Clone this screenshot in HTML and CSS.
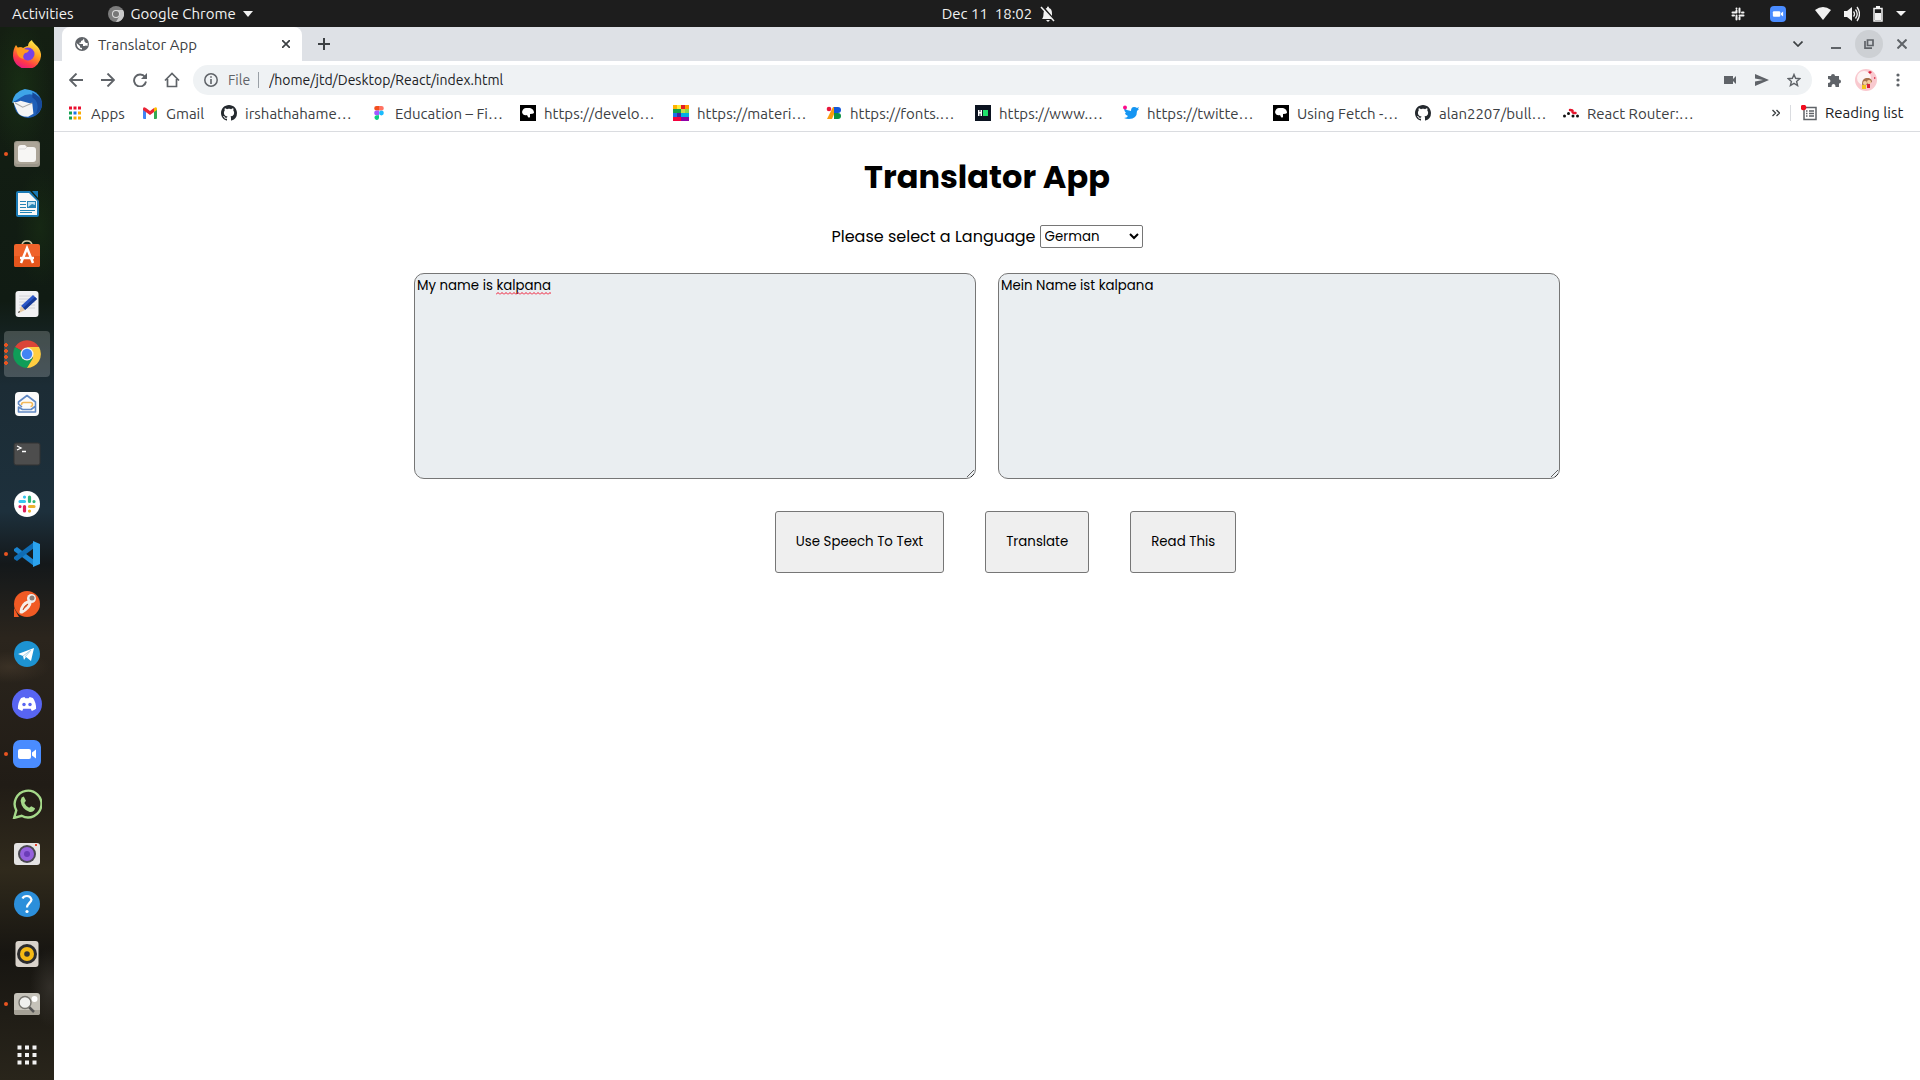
FILE: index.html
```html
<!DOCTYPE html>
<html lang="en">
<head>
<meta charset="utf-8">
<title>Translator App</title>
<link rel="stylesheet" href="styles.css">
</head>
<body>
<svg class="defs" aria-hidden="true">
  <symbol id="github" viewBox="0 0 16 16"><path fill="#24292e" d="M8 0C3.58 0 0 3.58 0 8c0 3.54 2.29 6.53 5.47 7.59.4.07.55-.17.55-.38 0-.19-.01-.82-.01-1.49-2.01.37-2.53-.49-2.69-.94-.09-.23-.48-.94-.82-1.13-.28-.15-.68-.52-.01-.53.63-.01 1.08.58 1.23.82.72 1.21 1.87.87 2.33.66.07-.52.28-.87.51-1.07-1.78-.2-3.64-.89-3.64-3.95 0-.87.31-1.59.82-2.15-.08-.2-.36-1.02.08-2.12 0 0 .67-.21 2.2.82.64-.18 1.32-.27 2-.27s1.36.09 2 .27c1.53-1.04 2.2-.82 2.2-.82.44 1.1.16 1.92.08 2.12.51.56.82 1.27.82 2.15 0 3.07-1.87 3.75-3.65 3.95.29.25.54.73.54 1.48 0 1.07-.01 1.93-.01 2.2 0 .21.15.46.55.38A8.01 8.01 0 0 0 16 8c0-4.42-3.58-8-8-8z"/></symbol>
  <symbol id="mdn" viewBox="0 0 16 16"><path d="M0 0h16v16H0z"/><path fill="#fff" d="M2 7q1-4 4-4h4q4 1 4 5-1 1-4 1v3q-1 1-2 0l-1-2q-4 1-5-3z"/></symbol>
  <symbol id="camera" viewBox="0 0 28 28"><rect width="28" height="28" rx="7" fill="#4a8cff"/><rect x="5" y="9" width="13" height="10" rx="2" fill="#fff"/><path fill="#fff" d="M19 12.500l4-3v9l-4-3z"/></symbol>
</svg>

<header class="topbar">
  <div class="top-left">
    <span>Activities</span>
    <span class="app-menu">
      <svg width="16" height="16" viewBox="0 0 16 16"><circle cx="8" cy="8" r="8" fill="#7c7c7c"/><path fill="#c8c8c8" d="M8 4h7a8 8 0 0 1-7 12l4-7z"/><circle cx="8" cy="8" r="4" fill="#ddd"/><circle cx="8" cy="8" r="3" fill="#777"/></svg>
      Google Chrome
      <svg width="10" height="6" viewBox="0 0 10 6"><path fill="#f2f2f2" d="M0 0h10L5 6z"/></svg>
    </span>
  </div>
  <div class="clock">
    <span>Dec 11&nbsp; 18:02</span>
    <svg width="16" height="16" viewBox="0 0 16 16"><path fill="#f2f2f2" d="M2 13c2-2 1-5 2-8 1-2 2-3 3-3 0-2 2-2 2 0 3 1 3 4 3 6 0 3 0 3 2 5zM6 14h4l-2 2z"/><path stroke="#1d1d1d" stroke-width="2" d="M2 0l13 15"/><path stroke="#f2f2f2" stroke-width="1.500" d="M1 1l13 14"/></svg>
  </div>
  <div class="tray">
    <svg width="14" height="14" viewBox="0 0 14 14" fill="none" stroke="#f2f2f2" stroke-width="2" stroke-linecap="round"><path d="M5.500 3.500v2M1.500 5.500h2.800M8.500 1.500v4M8.500 5.500h0M11 5.500h1.500M8.500 10.500v0M9.700 8.500h2.800M8.500 8.500v0M5.500 8.500v4M1.500 8.500h1.500M8.500 10.800v1.500M5.500 1.500v0"/></svg>
    <svg class="tray-zoom" width="16" height="16"><use href="#camera"/></svg>
    <svg width="16" height="13" viewBox="0 0 16 13"><path fill="#f2f2f2" d="M0 3q8-6 16 0L8 13z"/></svg>
    <svg width="16" height="16" viewBox="0 0 16 16"><path fill="#f2f2f2" d="M0 5h3l5-4v14l-5-4H0z"/><path fill="none" stroke="#f2f2f2" stroke-width="1.300" d="M9.500 5.500q2 2.500 0 5M11.500 3.500q3.500 4.500 0 9M13 1q5 7 0 14" /></svg>
    <svg width="10" height="16" viewBox="0 0 10 16"><path fill="none" stroke="#f2f2f2" stroke-width="1.500" d="M1 2.500h8v12.500H1z"/><path fill="#f2f2f2" d="M3 0h4v2H3zM2 7h6v7H2z"/></svg>
    <svg width="10" height="5" viewBox="0 0 10 5"><path fill="#f2f2f2" d="M0 0h10L5 5z"/></svg>
  </div>
</header>

<div class="desktop">
<nav class="dock" aria-label="Dock">
  <a href="#" class="dock-item" aria-label="Firefox"><svg viewBox="0 0 28 28"><defs><linearGradient id="ff" x1=".8" y1="0" x2=".3" y2="1"><stop offset="0" stop-color="#fff44f"/><stop offset=".45" stop-color="#ff9a1f"/><stop offset=".75" stop-color="#ff3b47"/><stop offset="1" stop-color="#e31587"/></linearGradient></defs><path fill="url(#ff)" d="M3 5l2 3c2-1 4-1 5 0 2-1 3-2 5-2 0-3 2-5 4-6 0 3 8 6 9 14A14 14 0 0 1 0 16C0 11 1 8 3 5z"/><circle cx="15" cy="14" r="6.500" fill="#7542e5"/><path fill="#ff9a1f" d="M3 8q6-2 8 1l5 1q-1 3-4 3-3 3-1 6-6-1-7-6z"/></svg></a>
  <a href="#" class="dock-item" aria-label="Thunderbird"><svg class="wide" viewBox="0 0 28 28"><circle cx="15" cy="14" r="13" fill="#1f5fb8"/><path fill="#3ea4e8" d="M0 13Q2 2 12 0q10 1 14 8Q16 2 8 8z"/><path fill="#174a9c" d="M19 8q8 5 3 16 6-4 6-11-2-7-9-10z"/><path fill="#f5f5f5" d="M1 12q3 1 7-1l11 3 1 9-5 3q-8 0-10-5z"/><path fill="none" stroke="#aaa" d="M3 13l7 4 9-4"/></svg></a>
  <a href="#" class="dock-item running" aria-label="Files"><svg viewBox="0 0 28 28"><rect x="1" y="1" width="26" height="26" rx="3" fill="#9c968a"/><rect x="2" y="2" width="24" height="22" rx="3" fill="#aca598"/><path fill="#f7f6f4" d="M5 8q0-3 3-3h4l2 2h6q3 0 3 3v9q0 3-3 3H8q-3 0-3-3z"/><path fill="none" stroke="#ddd" d="M6 9h6l2-2"/></svg></a>
  <a href="#" class="dock-item" aria-label="LibreOffice Writer"><svg viewBox="0 0 28 28"><path fill="#1a7ab5" d="M5 1h12l9 10v14q0 2-2 2H5q-2 0-2-2V3q0-2 2-2z"/><path fill="#f8f8f8" d="M6 3h10l8 8v14H5V3z"/><path fill="#1a7ab5" d="M19 1h6v7z"/><path stroke="#2583b5" d="M7 11.500h6M7 14.500h6M7 17.500h6M7 20.500h15M7 22.500h12"/><path fill="#2583b5" d="M14 11h9v7h-9z"/><path fill="#bcdff2" d="M15 12h7v3l-3-1-4 3z"/></svg></a>
  <a href="#" class="dock-item" aria-label="Ubuntu Software"><svg viewBox="0 0 28 28"><path fill="none" stroke="#d7cda8" stroke-width="1.600" d="M9 6q0-5 5-5t5 5"/><rect x="1" y="4" width="26" height="23" rx="2" fill="#f0632a"/><path fill="#e4551c" d="M1 16h26v9q0 2-2 2H3q-2 0-2-2z"/><path fill="none" stroke="#fff" stroke-width="2.500" d="M8 23l6-15 6 15M7 18h14"/></svg></a>
  <a href="#" class="dock-item" aria-label="Text Editor"><svg viewBox="0 0 28 28"><rect x="2.500" y="1" width="23" height="26" rx="3" fill="#f1f1f3"/><path stroke="#d4d4d8" d="M6 6h16M6 9h16M6 12h16M6 15h16M6 18h16"/><path fill="#2b56c6" d="M20 5l4 4-12 11-4-4z"/><path fill="#173b96" d="M24 9l-12 11-2-2L22 7z"/><path fill="#e5c9a1" d="M8 16l4 4-6 3z"/><path d="M6 21l1 1-2 1z"/></svg></a>
  <a href="#" class="dock-item active" aria-label="Google Chrome"><svg viewBox="0 0 28 28"><path fill="#db4437" d="M14 14L2 7a14 14 0 0 1 24 0z"/><path fill="#0f9d58" d="M14 14L2 7a14 14 0 0 0 12 21l6-10z"/><path fill="#ffcd40" d="M14 7h12a14 14 0 0 1-12 21l6-10z"/><circle cx="14" cy="14" r="6.500" fill="#f1f1f1"/><circle cx="14" cy="14" r="5.200" fill="#4285f4"/></svg></a>
  <a href="#" class="dock-item" aria-label="Mail"><svg viewBox="0 0 28 28"><rect x="2" y="2" width="24" height="24" rx="4" fill="#fbfbfb"/><path fill="none" stroke="#6189c4" stroke-width="1.600" stroke-linejoin="round" d="M9 17l-3.500-3v-2L14 5.500l8.500 6.500v10h-17v-5l4 2.500H18l4-3"/><path fill="none" stroke="#f2b95b" stroke-width="1.600" d="M8.500 15q0-2.500 2-2.500h7q2 0 2 2t-2 2"/></svg></a>
  <a href="#" class="dock-item" aria-label="Terminal"><svg viewBox="0 0 28 28"><rect x="1" y="3" width="26" height="22" rx="2" fill="#4d4d4d" stroke="#333"/><path fill="none" stroke="#fff" stroke-width="1.300" d="M4 6l4 2-4 2M9 11.500h4"/></svg></a>
  <a href="#" class="dock-item" aria-label="Slack"><svg viewBox="0 0 28 28"><circle cx="14" cy="14" r="13" fill="#fff"/><g fill="none" stroke-width="3.200" stroke-linecap="round"><path stroke="#36c5f0" d="M11.500 7v0.100M7 11.500h4.500"/><path stroke="#2eb67d" d="M16.500 7v4.500M21 11.500v0.100"/><path stroke="#ecb22e" d="M16.500 16.500H21M16.500 21v0.100"/><path stroke="#e01e5a" d="M11.500 16.500V21M7 16.500v0.100"/></g></svg></a>
  <a href="#" class="dock-item running" aria-label="Visual Studio Code"><svg viewBox="0 0 28 28"><path fill="#1a84d0" d="M1 9l3-2 17 13v6L1 11z"/><path fill="#0f6db5" d="M1 19l3 2L21 8V2L1 17z"/><path fill="#2ba3ee" d="M20 1l7 3v20l-7 3z"/></svg></a>
  <a href="#" class="dock-item" aria-label="Postman"><svg viewBox="0 0 28 28"><circle cx="14" cy="14" r="13" fill="#f15a24"/><path fill="#f15a24" d="M1 18v9h5z"/><circle cx="18.500" cy="8.500" r="4.500" fill="#eee"/><circle cx="19" cy="8" r="2.500" fill="#8a7b74"/><path fill="none" stroke="#f7efe9" stroke-width="3" stroke-linecap="round" d="M15 12q-6 2-7 10M17 13q0 4-8 9"/><path fill="none" stroke="#b94a22" d="M15 14q-4 2-5 6"/></svg></a>
  <a href="#" class="dock-item" aria-label="Telegram"><svg viewBox="0 0 28 28"><circle cx="14" cy="14" r="13" fill="#1d93d2"/><path fill="#fff" d="M5 14l16-6-3 13-5-4-2 3-1-4z"/><path fill="none" stroke="#a9cfe6" d="M10 16l8-6-6 7"/></svg></a>
  <a href="#" class="dock-item" aria-label="Discord"><svg class="wide" viewBox="0 0 28 28"><circle cx="14" cy="14" r="14" fill="#5865f2"/><path fill="#fff" d="M8.500 8.500l3-1 1 1.200h3l1-1.200 3 1q3 4 3 10-1 1-4 2l-1-2h-7l-1 2q-3-1-4-2 0-6 3-10z"/><circle cx="11.200" cy="14.500" r="1.600" fill="#5865f2"/><circle cx="16.800" cy="14.500" r="1.600" fill="#5865f2"/></svg></a>
  <a href="#" class="dock-item running" aria-label="Zoom"><svg><use href="#camera"/></svg></a>
  <a href="#" class="dock-item" aria-label="WhatsApp"><svg class="wide" viewBox="0 0 28 28"><path fill="none" stroke="#a5d98a" stroke-width="2.200" d="M2 27l2-7A12.500 12.500 0 1 1 9 25z"/><path fill="#a5d98a" d="M9 8l2-1 2 4-1.500 2q1.500 3 4.500 4.500l2-1.500 3.500 2q-1 4-5 3.500Q9 19 8 11z"/></svg></a>
  <a href="#" class="dock-item" aria-label="Camera"><svg viewBox="0 0 28 28"><rect x="1" y="3" width="26" height="22" rx="3" fill="#e4e3e3"/><circle cx="14" cy="14" r="9" fill="#4a4852"/><circle cx="14" cy="14" r="7" fill="#9561dd"/><circle cx="14" cy="14" r="3" fill="#6b3cb8"/><path fill="#e8442e" d="M22 4h2v2h-2z"/></svg></a>
  <a href="#" class="dock-item" aria-label="Help"><svg viewBox="0 0 28 28"><circle cx="14" cy="14" r="13" fill="#2c8fdb"/><path fill="none" stroke="#fff" stroke-width="2.200" d="M9.500 8.500q1-2.500 4.500-2.500t4.500 3.500c0 3-4.500 4-4.500 8"/><circle cx="14" cy="21.500" r="1.600" fill="#fff"/></svg></a>
  <a href="#" class="dock-item" aria-label="Rhythmbox"><svg viewBox="0 0 28 28"><rect x="2.500" y="1" width="23" height="26" rx="3" fill="#d9d3cb"/><circle cx="14" cy="14" r="10" fill="#2c2c2e"/><circle cx="14" cy="14" r="7" fill="#f5b914"/><circle cx="14" cy="14" r="2.800" fill="#333"/></svg></a>
  <a href="#" class="dock-item running" aria-label="Image Viewer"><svg viewBox="0 0 28 28"><rect x="1" y="3" width="26" height="22" rx="3" fill="#c5c2b9"/><path fill="#a5a196" d="M1 20h26v3q0 2-2 2H3q-2 0-2-2z"/><circle cx="21.500" cy="9" r="3" fill="#fff"/><path stroke="#555" stroke-width="2.500" d="M16 17l5 5"/><circle cx="12" cy="12.500" r="6" fill="#f0f0ee" stroke="#77756f" stroke-width="1.400"/></svg></a>
  <a href="#" class="dock-item" aria-label="Show Applications"><svg viewBox="0 0 28 28"><path fill="#f2f2f2" d="M4.500 5.500h4v4h-4zM12 5.500h4v4h-4zM19.500 5.500h4v4h-4zM4.500 13h4v4h-4zM12 13h4v4h-4zM19.500 13h4v4h-4zM4.500 20.500h4v4h-4zM12 20.500h4v4h-4zM19.500 20.500h4v4h-4z"/></svg></a>
</nav>

<div class="browser">
  <div class="tabstrip">
    <div class="tab">
      <svg width="14" height="14" viewBox="0 0 14 14"><circle cx="7" cy="7" r="7" fill="#5f6368"/><path fill="#fff" d="M9 1.500q-1 2-3 2.500v1.500H4.500V7h3.500v2h1.500l1.500-.5L12.500 9l.2-3H11L9.500 4.500zM1.500 6l3.500 3v1.500l2 .5v1.500Q2 12 1.500 6z"/></svg>
      <span class="tab-title">Translator App</span>
      <button class="icon-btn" aria-label="Close tab"><svg width="8" height="8" viewBox="0 0 8 8"><path stroke="#3c4043" stroke-width="1.700" d="M0 0l8 8M8 0L0 8"/></svg></button>
    </div>
    <button class="icon-btn new-tab" aria-label="New tab"><svg width="12" height="12" viewBox="0 0 12 12"><path stroke="#3c4043" stroke-width="2" d="M6 0v12M0 6h12"/></svg></button>
    <div class="window-controls">
      <button class="icon-btn" aria-label="Search tabs"><svg width="10" height="6" viewBox="0 0 10 6"><path fill="none" stroke="#3c4043" stroke-width="1.700" d="M0.500 0.500L5 5l4.500-4.500"/></svg></button>
      <button class="icon-btn" aria-label="Minimize"><svg width="10" height="10" viewBox="0 0 10 10"><path fill="#5f6368" d="M0 8h10v2H0z"/></svg></button>
      <button class="icon-btn restore" aria-label="Restore"><svg width="10" height="10" viewBox="0 0 10 10"><path fill="none" stroke="#5f6368" stroke-width="1.700" d="M3.500 1h5.500v5.500H3.500zM1 2v7.200h7"/></svg></button>
      <button class="icon-btn" aria-label="Close"><svg width="10" height="10" viewBox="0 0 10 10"><path stroke="#5f6368" stroke-width="2" d="M0.500 0.500l9 9M9.500 0.500l-9 9"/></svg></button>
    </div>
  </div>

  <div class="toolbar">
    <button class="icon-btn" aria-label="Back"><svg width="14" height="14" viewBox="0 0 14 14"><path fill="none" stroke="#5f6368" stroke-width="1.900" d="M14 7H1M7.500 0.500L1 7l6.500 6.500"/></svg></button>
    <button class="icon-btn" aria-label="Forward"><svg width="14" height="14" viewBox="0 0 14 14"><path fill="none" stroke="#5f6368" stroke-width="1.900" d="M0 7h13M6.500 0.500L13 7l-6.500 6.500"/></svg></button>
    <button class="icon-btn" aria-label="Reload"><svg width="14" height="14" viewBox="0 0 14 14"><path fill="none" stroke="#5f6368" stroke-width="1.900" d="M12 4A6 6 0 1 0 13 8.500"/><path fill="#5f6368" d="M14 0v6H8z"/></svg></button>
    <button class="icon-btn" aria-label="Home"><svg width="16" height="16" viewBox="0 0 16 16"><path fill="none" stroke="#5f6368" stroke-width="1.700" d="M1 8.500L8 1.500l7 7M3.500 7v7.500h9V7"/></svg></button>
    <div class="omnibox">
      <svg width="14" height="14" viewBox="0 0 14 14"><circle cx="7" cy="7" r="6.200" fill="none" stroke="#5f6368" stroke-width="1.500"/><path fill="#5f6368" d="M6.200 3.200h1.600v1.600H6.200zM6.200 6h1.600v5H6.200z"/></svg>
      <span class="scheme">File</span>
      <input class="url" type="text" aria-label="Address" value="/home/jtd/Desktop/React/index.html" spellcheck="false">
      <svg width="14" height="10" viewBox="0 0 14 10"><path fill="#5f6368" d="M1 1h9v3l3-3v8l-3-3v3H1z"/></svg>
      <svg width="14" height="12" viewBox="0 0 14 12"><path fill="#5f6368" d="M0 0l14 6-14 6V7.500L8 6 0 4.500z"/></svg>
      <svg width="14" height="14" viewBox="0 0 14 14"><path fill="none" stroke="#5f6368" stroke-width="1.400" d="M7 1.500l1.600 3.800 4.200.4-3.200 2.700 1 4.100L7 10.300l-3.600 2.200 1-4.100L1.200 5.700l4.200-.4z"/></svg>
    </div>
    <div class="toolbar-end">
      <button class="icon-btn" aria-label="Extensions"><svg width="15" height="15" viewBox="0 0 15 15"><path fill="#5f6368" d="M1 3h3a2 2 0 0 1 4 0h4v3.500a2 2 0 0 1 0 4V14H8.500q0-3-2-3t-2 3H1v-4q2.500 0 2.500-2T1 6z"/></svg></button>
      <button class="icon-btn" aria-label="Profile"><svg width="22" height="22" viewBox="0 0 22 22"><circle cx="11" cy="11" r="11" fill="#f9c9cf"/><circle cx="9" cy="9" r="7" fill="#fdf3f3"/><path fill="#a6704a" d="M7 15q0-5 4-6h3q3 1 3 4l-9 5z"/><circle cx="10" cy="14" r="2" fill="#f5cf9f"/><circle cx="14" cy="13" r="2" fill="#f5cf9f"/><path fill="#f2c51d" d="M7 16h4v4H7z"/><path fill="#d8213b" d="M12 15h3v4h-3zM19 8l2 1-2 1zM13 3l2 2 2-2-2-1z"/></svg></button>
      <button class="icon-btn" aria-label="Menu"><svg width="4" height="14" viewBox="0 0 4 14"><g fill="#5f6368"><circle cx="2" cy="2" r="1.600"/><circle cx="2" cy="7" r="1.600"/><circle cx="2" cy="12" r="1.600"/></g></svg></button>
    </div>
  </div>

  <nav class="bookmarks" aria-label="Bookmarks">
    <a href="#"><svg viewBox="0 0 16 16"><path fill="#ea0f2f" d="M2 1.500h3v3H2zM6.500 1.500h3v3h-3zM11 1.500h3v3h-3z"/><path fill="#12a150" d="M2 6.500h3v3H2zM2 11.500h3v3H2z"/><path fill="#1a73e8" d="M6.500 6.500h3v3h-3z"/><path fill="#fbab00" d="M11 6.500h3v3h-3zM6.500 11.500h3v3h-3zM11 11.500h3v3h-3z"/></svg>Apps</a>
    <a href="#"><svg viewBox="0 0 16 16"><path fill="#4285f4" d="M1 4l3 2v8H2q-1 0-1-1z"/><path fill="#34a853" d="M12 6l3-2v9q0 1-1 1h-2z"/><path fill="#ea2335" d="M1 4q0-3 3-1l4 3 4-3v4l-4 3-7-5z"/><path fill="#fbbc04" d="M12 3q3-2 3 1v1l-3 2z"/></svg>Gmail</a>
    <a href="#"><svg><use href="#github"/></svg>irshathahame…</a>
    <a href="#"><svg viewBox="0 0 16 16"><path fill="#f24e1e" d="M8 1H5.500a2.300 2.300 0 0 0 0 4.600H8z"/><path fill="#ff7262" d="M8 1h2.500a2.300 2.300 0 0 1 0 4.600H8z"/><path fill="#a259ff" d="M8 5.600H5.500a2.300 2.300 0 0 0 0 4.700H8z"/><circle cx="10.400" cy="8" r="2.400" fill="#1abcfe"/><path fill="#0acf83" d="M8 10.300H5.500A2.300 2.300 0 1 0 8 13z"/></svg>Education – Fi…</a>
    <a href="#"><svg><use href="#mdn"/></svg>https://develo…</a>
    <a href="#"><svg viewBox="0 0 16 16"><path fill="#ffb300" d="M0 0h4v4H0z"/><path fill="#ffeb3b" d="M4 0h4v4H4z"/><path fill="#e51c23" d="M8 0h4v4H8z"/><path fill="#ff9800" d="M12 0h4v4h-4z"/><path fill="#12a14b" d="M0 4h8v4H0z"/><path fill="#c6e04b" d="M8 4h4v4H8z"/><path fill="#8bd94b" d="M12 4h4v4h-4z"/><path fill="#1a73e8" d="M0 8h4v4H0z"/><path fill="#4527a0" d="M4 8h4v4H4z"/><path fill="#00b0e8" d="M8 8h8v4H8z"/><path fill="#f4003d" d="M0 12h8v4H0z"/><path fill="#9100a8" d="M8 12h8v4H8z"/></svg>https://materi…</a>
    <a href="#"><svg viewBox="0 0 16 16"><circle cx="3" cy="4" r="2.300" fill="#e8173e"/><path fill="#fb9c0c" d="M7 2h4L6 14H1z"/><path fill="#1358d8" d="M8 2h4a3 3 0 0 1 0 6H8z"/><path fill="#0d9344" d="M8 8h4a3 3 0 0 1 0 6H8z"/></svg>https://fonts.…</a>
    <a href="#"><svg viewBox="0 0 16 16"><path fill="#0b1320" d="M0 0h16v16H0z"/><path fill="#fff" d="M3 5h1.500v2h1V5H7v6H5.500V8.500h-1V11H3z"/><path fill="#1fe26b" d="M8 5h5v6H8z"/></svg>https://www.…</a>
    <a href="#"><svg viewBox="0 0 16 16"><path fill="#1595f2" d="M1 3q3 3 7 3 0-4 3-4 2 0 3 1l2-1-1 2 1 0-2 2q0 8-8 8-3 0-5-1 3 0 4-2-3-1-3-3h1Q1 6 1 3z"/><circle cx="2" cy="2.500" r="2" fill="#ff0b8a"/></svg>https://twitte…</a>
    <a href="#"><svg><use href="#mdn"/></svg>Using Fetch -…</a>
    <a href="#"><svg><use href="#github"/></svg>alan2207/bull…</a>
    <a href="#"><svg viewBox="0 0 16 16"><g fill="#111"><circle cx="1.500" cy="11" r="1.500"/><circle cx="5.500" cy="8.500" r="1.500"/><circle cx="10" cy="11" r="1.500"/><circle cx="14.500" cy="11" r="1.500"/></g><path fill="none" stroke="#e5162d" stroke-width="2.500" stroke-linecap="round" d="M7 5q3 0 2.500 1.500T12.500 8"/></svg>React Router:…</a>
    <button class="icon-btn" aria-label="More bookmarks"><svg width="8" height="8" viewBox="0 0 8 8"><path fill="none" stroke="#3c4043" stroke-width="1.400" d="M0.500 1l3 3-3 3M4.500 1l3 3-3 3"/></svg></button>
    <a href="#" class="reading"><svg viewBox="0 0 16 16"><path fill="none" stroke="#5f6368" stroke-width="1.500" d="M3 2.500h12v12H3zM5 6h1.500M8 6h5M5 8.500h1.500M8 8.500h5M5 11h1.500M8 11h5"/><circle cx="2.500" cy="2.500" r="2.800" fill="#f00d1e"/></svg>Reading list</a>
  </nav>

  <main class="page">
    <h1>Translator App</h1>
    <div class="language">
      <label for="lang">Please select a Language</label>
      <select id="lang"><option>German</option></select>
    </div>
    <div class="texts">
      <div class="field">
        <textarea aria-label="Source text" spellcheck="false">My name is kalpana</textarea>
        <svg class="squiggle" width="55" height="3"><defs><pattern id="wave" width="4" height="3" patternUnits="userSpaceOnUse"><path fill="none" stroke="#f0142f" d="M0 2.500l2-2 2 2"/></pattern></defs><rect width="55" height="3" fill="url(#wave)"/></svg>
      </div>
      <div class="field">
        <textarea aria-label="Translated text" spellcheck="false">Mein Name ist kalpana</textarea>
      </div>
    </div>
    <div class="actions">
      <button type="button">Use Speech To Text</button>
      <button type="button">Translate</button>
      <button type="button">Read This</button>
    </div>
  </main>
</div>
</div>
</body>
</html>
```
FILE: styles.css
```css
* { box-sizing: border-box; }

body {
  margin: 0;
  min-height: 100vh;
  display: flex;
  flex-direction: column;
  font-family: Ubuntu, "Noto Sans", sans-serif;
  font-size: 15px;
  color: #3c4043;
  background: #fff;
}

.defs { display: none; }
svg { flex: none; display: block; }
a { color: inherit; text-decoration: none; }

/* System bar */
.topbar {
  height: 27px;
  display: grid;
  grid-template-columns: 1fr auto 1fr;
  align-items: center;
  padding: 0 14px 0 12px;
  background: #1d1d1d;
  color: #f2f2f2;
  line-height: 26px;
}
.top-left { display: flex; gap: 34px; }
.app-menu { display: flex; align-items: center; gap: 7px; }
.clock { display: flex; align-items: center; gap: 8px; margin-left: 80px; }
.tray {
  display: flex;
  justify-content: flex-end;
  align-items: center;
  gap: 13px;
}
.tray-zoom { margin: 0 16px 0 12px; }

.desktop { flex: 1; display: flex; }

/* Dock */
.dock {
  width: 54px;
  flex: none;
  padding-top: 2px;
  background:
    radial-gradient(ellipse 30px 70px at 20px 60px, #1c3a1688, transparent),
    radial-gradient(ellipse 24px 60px at 40px 200px, #1a321488, transparent),
    radial-gradient(ellipse 40px 16px at 10px 640px, #4a3d2e88, transparent),
    radial-gradient(ellipse 20px 40px at 50px 960px, #44403a88, transparent),
    linear-gradient(#141f12, #101b13 26%, #1c2c35 34%, #1d303c 46%, #14181a 51%, #2b251d 58%, #211c16 72%, #302a1c 80%, #171511 88%, #29251b);
}
.dock-item {
  height: 50px;
  display: flex;
  align-items: center;
  justify-content: center;
  position: relative;
}
.dock-item svg { width: 28px; height: 28px; }
.dock-item svg.wide { width: 30px; height: 30px; }
.running::before {
  content: "";
  position: absolute;
  left: 4px;
  width: 4px;
  height: 4px;
  border-radius: 50%;
  background: #e95420;
}
.active {
  height: 46px;
  margin: 2px 4px;
  border-radius: 4px;
  background: #ffffff33;
}
.active::before {
  content: "";
  position: absolute;
  left: 0;
  top: 11px;
  width: 4px;
  height: 24px;
  background: radial-gradient(circle, #e95420 2px, transparent 2px) 0 0 / 4px 6px;
}

/* Browser chrome */
.browser { flex: 1; min-width: 0; }
.icon-btn {
  display: flex;
  align-items: center;
  justify-content: center;
  flex: none;
  width: 28px;
  height: 28px;
  padding: 0;
  border: 0;
  border-radius: 50%;
  background: none;
}
.tabstrip {
  height: 34px;
  display: flex;
  align-items: center;
  padding: 0 4px 0 8px;
  background: #dee1e6;
}
.tab {
  width: 240px;
  height: 100%;
  display: flex;
  align-items: center;
  gap: 9px;
  padding: 0 2px 0 13px;
  border-radius: 8px 8px 0 0;
  background: #fff;
}
.tab-title { flex: 1; }
.new-tab { margin-left: 8px; }
.window-controls { margin-left: auto; display: flex; gap: 5px; }
.window-controls .icon-btn:first-child { margin-right: 5px; }
.window-controls .restore { background: #cdd0d4; }

.toolbar {
  display: flex;
  align-items: center;
  gap: 4px;
  padding: 4px 8px 0;
}
.omnibox {
  flex: 1;
  height: 30px;
  display: flex;
  align-items: center;
  gap: 18px;
  margin-left: 3px;
  padding: 0 11px;
  border-radius: 15px;
  background: #eff2f4;
  font-size: 14px;
}
.scheme {
  margin-left: -8px;
  padding-right: 8px;
  border-right: 1px solid #9aa0a6;
  color: #5f6368;
  line-height: 16px;
}
.url {
  flex: 1;
  margin-left: -8px;
  padding: 0;
  border: 0;
  outline: 0;
  background: none;
  color: #202124;
  font: inherit;
}
.toolbar-end { display: flex; align-items: center; gap: 4px; margin-left: 4px; }

.bookmarks {
  height: 37px;
  display: grid;
  grid-template-columns: 75px 79px 150px 149px 153px 153px 149px 148px 150px 142px 148px 1fr 28px 130px;
  align-items: center;
  padding-left: 13px;
  border-bottom: 1px solid #dadce0;
  white-space: nowrap;
}
.bookmarks a { display: flex; align-items: center; gap: 8px; }
.bookmarks svg { height: 16px; }
.bookmarks a svg { width: 16px; }
.bookmarks .reading {
  padding-left: 10px;
  border-left: 1px solid #dadce0;
  color: #202124;
  line-height: 16px;
}

/* Translator page */
.page {
  display: flex;
  flex-direction: column;
  align-items: center;
  color: #000;
  font-family: Poppins, Inter, sans-serif;
}
h1 {
  margin: 21px 0;
  font-size: 32px;
  line-height: 48px;
}
.language {
  display: flex;
  align-items: center;
  gap: 4px;
  height: 28px;
  font-size: 16px;
}
select, textarea, .actions button {
  border: 1px solid #767676;
  color: #000;
  font-family: inherit;
}
select {
  width: 103px;
  height: 23px;
  border-radius: 2px;
  background: #fff;
}
.texts {
  align-self: stretch;
  display: flex;
  justify-content: center;
  gap: 22px;
  margin-top: 23px;
}
.field { position: relative; flex: 0 1 562px; }
textarea {
  display: block;
  width: 100%;
  height: 206px;
  padding: 2px;
  border-radius: 10px;
  background: #eaeef1;
  resize: both;
}
.squiggle { position: absolute; left: 82px; top: 19px; }
.actions {
  display: flex;
  gap: 41px;
  margin-top: 32px;
  padding-left: 37px;
}
.actions button {
  padding: 20px;
  border-radius: 3px;
  background: #efefef;
}
```
